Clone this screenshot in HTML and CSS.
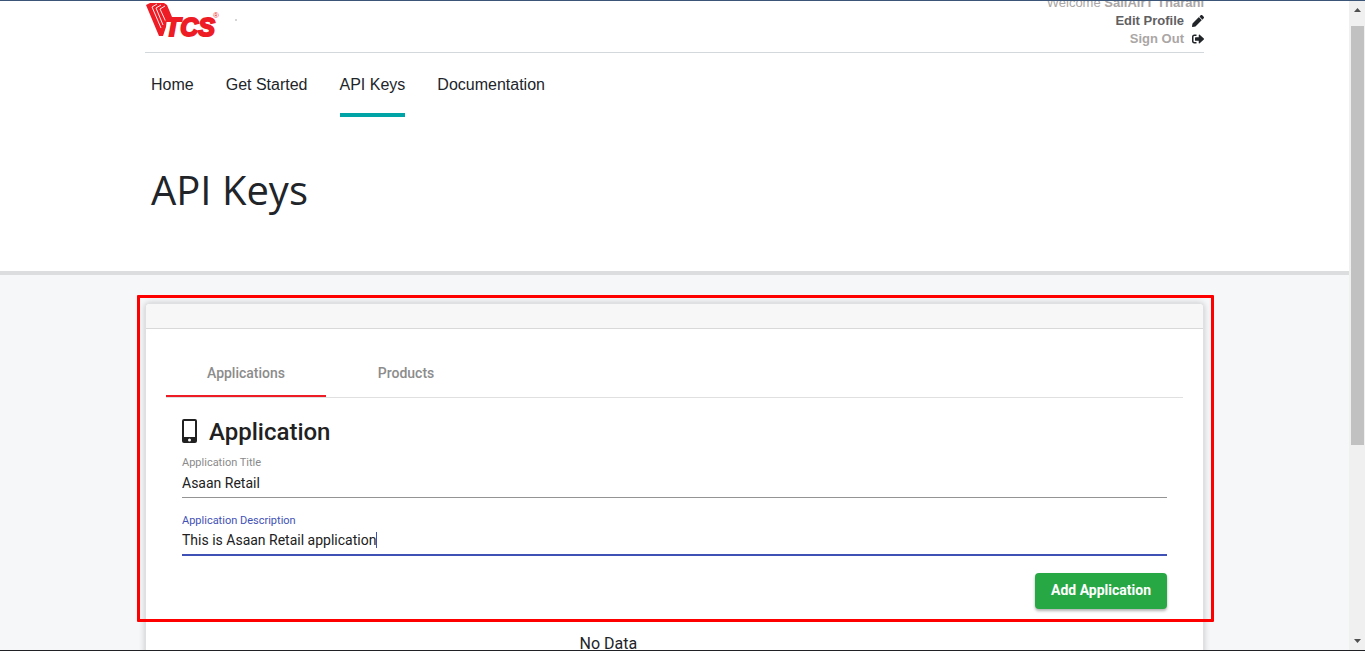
FILE: index.html
```
<!DOCTYPE html>
<html lang="en">
<head>
    <meta charset="UTF-8">
    <meta name="viewport" content="width=device-width, initial-scale=1.0">
    <title>API Keys</title>
    <link rel="stylesheet" href="styles.css">
</head>
<body>

<div class="window">
    <div class="page">
        <div class="top-section">
            <div class="container">
                <!-- Header -->
                <header class="header">
                    <a href="#" class="logo" aria-label="TCS home">
                        <svg width="96" height="40" viewBox="0 0 96 40">
                            <path fill="#ee1c25" d="M1 5 L5 3 H19 L22 5 L27 17 L22 18 L21 27 L18 36 L14 36 Z"/>
                            <path stroke="#fff" stroke-width="0.900" fill="none" stroke-linejoin="round" d="M12 4 L7 7 L16 28 M16 5 L11 8 L18 25 M20 6 L15 9 L21 22"/>
                            <path fill="#ee1c25" d="M22 17 H37 L35 22 H20 Z"/>
                            <text class="logo-text" x="20" y="36">TCS</text>
                            <text class="logo-mark" x="68" y="18">®</text>
                            <rect x="90" y="19" width="2" height="2" fill="#d5d5d5"/>
                        </svg>
                    </a>
                    <div class="user-menu">
                        <div class="user-row muted"><span>Welcome <b>SailAirT Tharani</b></span></div>
                        <a href="#" class="user-row">
                            <b>Edit Profile</b>
                            <svg width="12" height="12" viewBox="0 0 512 512" fill="#212529"><path d="M498 142l-46 46c-5 5-12 5-17 0L324 77c-5-5-5-12 0-17l46-46c19-19 49-19 68 0l60 60c19 19 19 49 0 68zM284 100L22 362 0 484c-3 16 11 31 28 28l121-22 263-262c5-5 5-12 0-17L301 100c-5-5-12-5-17 0z"/></svg>
                        </a>
                        <a href="#" class="user-row muted">
                            <b>Sign Out</b>
                            <svg width="12" height="12" viewBox="0 0 512 512" fill="#212529"><path d="M505 273L329 441c-15 15-41 4-41-17v-96H152c-13 0-24-11-24-24v-96c0-13 11-24 24-24h136V88c0-21 26-32 41-17l176 168c9 9 9 25 0 34zM192 436v-40c0-7-5-12-12-12H96c-18 0-32-14-32-32V160c0-18 14-32 32-32h84c7 0 12-5 12-12V76c0-7-5-12-12-12H96C43 64 0 107 0 160v192c0 53 43 96 96 96h84c7 0 12-5 12-12z"/></svg>
                        </a>
                    </div>
                </header>

                <!-- Menu -->
                <nav class="nav">
                    <a href="#">Home</a>
                    <a href="#">Get Started</a>
                    <a href="#" class="active">API Keys</a>
                    <a href="#">Documentation</a>
                </nav>

                <h1 class="page-title">API Keys</h1>
            </div>
        </div>

        <main class="container">
            <div class="card">
                <div class="highlighted">
                    <div class="card-header"></div>
                    <div class="card-body">
                        <div class="tabs" role="tablist">
                            <button class="tab active" role="tab" aria-selected="true">Applications</button>
                            <button class="tab" role="tab" aria-selected="false">Products</button>
                        </div>
                        <form class="app-form">
                            <h2 class="form-title">
                                <svg width="16" height="26" viewBox="0 0 16 26"><path fill="#212121" fill-rule="evenodd" d="M2 0h11a2 2 0 0 1 2 2v20a2 2 0 0 1-2 2H2a2 2 0 0 1-2-2V2a2 2 0 0 1 2-2zM2 2v16h11V2zM7.500 19.500a1.500 1.500 0 1 0 0 3 1.500 1.500 0 0 0 0-3z"/></svg>
                                Application
                            </h2>
                            <div class="field">
                                <label for="app-title">Application Title</label>
                                <div class="field-line">
                                    <input type="text" id="app-title" value="Asaan Retail">
                                </div>
                            </div>
                            <div class="field focused">
                                <label for="app-description">Application Description</label>
                                <div class="field-line">
                                    <input type="text" id="app-description" value="This is Asaan Retail application">
                                    <span class="caret"></span>
                                </div>
                            </div>
                            <div class="form-actions">
                                <button type="button" class="add-button">Add Application</button>
                            </div>
                        </form>
                    </div>
                    <div class="highlight"></div>
                </div>
                <p class="no-data">No Data</p>
            </div>
        </main>
    </div>

    <!-- Scrollbar -->
    <div class="scrollbar">
        <svg width="7" height="4" viewBox="0 0 7 4"><path fill="#505050" d="M0 4 L3.500 0 L7 4z"/></svg>
        <div class="track"><div class="thumb"></div></div>
        <svg width="7" height="4" viewBox="0 0 7 4"><path fill="#505050" d="M0 0 L3.500 4 L7 0z"/></svg>
    </div>
</div>

</body>
</html>
```
FILE: styles.css
```
* {
    box-sizing: border-box;
}

body {
    margin: 0;
    font-family: "Liberation Sans", Arial, sans-serif;
    font-size: 16px;
    color: #212529;
}

a {
    color: inherit;
    text-decoration: none;
}

.window {
    display: flex;
    height: 100vh;
    border-top: 1px solid #3b5578;
    border-bottom: 1px solid #202124;
}

.page {
    flex: 1;
    overflow: hidden;
    background-color: #f5f7f9;
}

.container {
    max-width: 1059px;
    margin: 0 auto;
}

.top-section {
    background-color: #fff;
    border-bottom: 4px solid #dcdddf;
}

/* Header */
.header {
    display: flex;
    justify-content: space-between;
    align-items: flex-end;
    height: 52px;
    border-bottom: 1px solid #d3d8dd;
}

.logo {
    display: flex;
    padding-bottom: 12px;
}

.logo-text {
    font: italic bold 25px "Liberation Sans", Arial, sans-serif;
    fill: #ee1c25;
    stroke: #ee1c25;
    stroke-width: 2px;
}

.logo-mark {
    font: 8px "Liberation Sans", Arial, sans-serif;
    fill: #ee1c25;
}

.user-menu {
    display: flex;
    flex-direction: column;
    align-items: flex-end;
    padding-bottom: 4px;
    font-size: 13px;
    line-height: 18px;
}

.user-row {
    display: flex;
    align-items: center;
    gap: 8px;
    color: #5f6062;
}

.user-row.muted {
    color: #aaa6a5;
}

/* Menu */
.nav {
    display: flex;
    gap: 32px;
    padding: 20px 6px 0;
}

.nav a {
    padding-bottom: 16px;
    line-height: 24px;
    border-bottom: 4px solid transparent;
}

.nav a.active {
    border-color: #00a3a6;
}

.page-title {
    margin: 0;
    padding: 49px 6px 57px;
    font: 400 40px/48px "Open Sans", sans-serif;
}

/* Card */
.card {
    margin-top: 28px;
    min-height: 600px;
    background-color: #fff;
    border: 1px solid #dfe0e1;
    border-radius: 4px;
    box-shadow: 0 0 6px rgba(0, 0, 0, 0.2);
    font-family: Roboto, sans-serif;
}

.highlighted {
    position: relative;
}

.highlight {
    position: absolute;
    inset: -9px -11px -9px -9px;
    border: 3px solid #ff0000;
    border-radius: 1px;
    pointer-events: none;
}

.card-header {
    height: 25px;
    background-color: #f7f7f7;
    border-bottom: 1px solid #d9d9d9;
    border-radius: 4px 4px 0 0;
}

.card-body {
    padding: 20px 20px 4px;
}

.tabs {
    display: flex;
    border-bottom: 1px solid #e0e0e0;
}

.tab {
    width: 160px;
    height: 48px;
    padding: 2px 0 0;
    border: none;
    border-bottom: 2px solid transparent;
    background: none;
    font: 500 14px Roboto, sans-serif;
    color: #8c8c8c;
    cursor: pointer;
}

.tab.active {
    border-color: #ee1c25;
}

.app-form {
    padding: 18px 16px 0;
}

.form-title {
    display: flex;
    align-items: center;
    gap: 11px;
    margin: 0;
    font-size: 24px;
    font-weight: 500;
    line-height: 32px;
    color: #212121;
}

.field {
    padding-top: 8px;
    margin-bottom: 8px;
}

.field label {
    display: block;
    font-size: 11px;
    line-height: 14px;
    color: #8a8a8a;
}

.field-line {
    display: flex;
    align-items: center;
    height: 28px;
    padding-bottom: 2px;
    border-bottom: 1px solid #949494;
}

.field input {
    field-sizing: content;
    padding: 0;
    border: none;
    outline: none;
    font: 14px Roboto, sans-serif;
    color: #212121;
}

.focused label {
    color: #3f51b5;
}

.focused .field-line {
    border-bottom: 2px solid #3f51b5;
}

.caret {
    width: 1px;
    height: 16px;
    background-color: #3f51b5;
}

.form-actions {
    display: flex;
    justify-content: flex-end;
    padding-top: 9px;
}

.add-button {
    height: 36px;
    padding: 0 16px 2px;
    border: none;
    border-radius: 4px;
    background-color: #28a745;
    box-shadow: 0 2px 3px rgba(0, 0, 0, 0.3);
    font: 700 14px Roboto, sans-serif;
    color: #fff;
    cursor: pointer;
}

.no-data {
    width: 87.5%;
    margin: 0;
    padding-top: 19px;
    line-height: 24px;
    text-align: center;
}

/* Scrollbar */
.scrollbar {
    display: flex;
    flex-direction: column;
    align-items: center;
    width: 16px;
    padding: 7px 1px 7px 2px;
    background-color: #f0f0f0;
}

.track {
    flex: 1;
    width: 100%;
    padding: 14px 0;
}

.thumb {
    height: 70%;
    background-color: #c1c1c1;
}
```
